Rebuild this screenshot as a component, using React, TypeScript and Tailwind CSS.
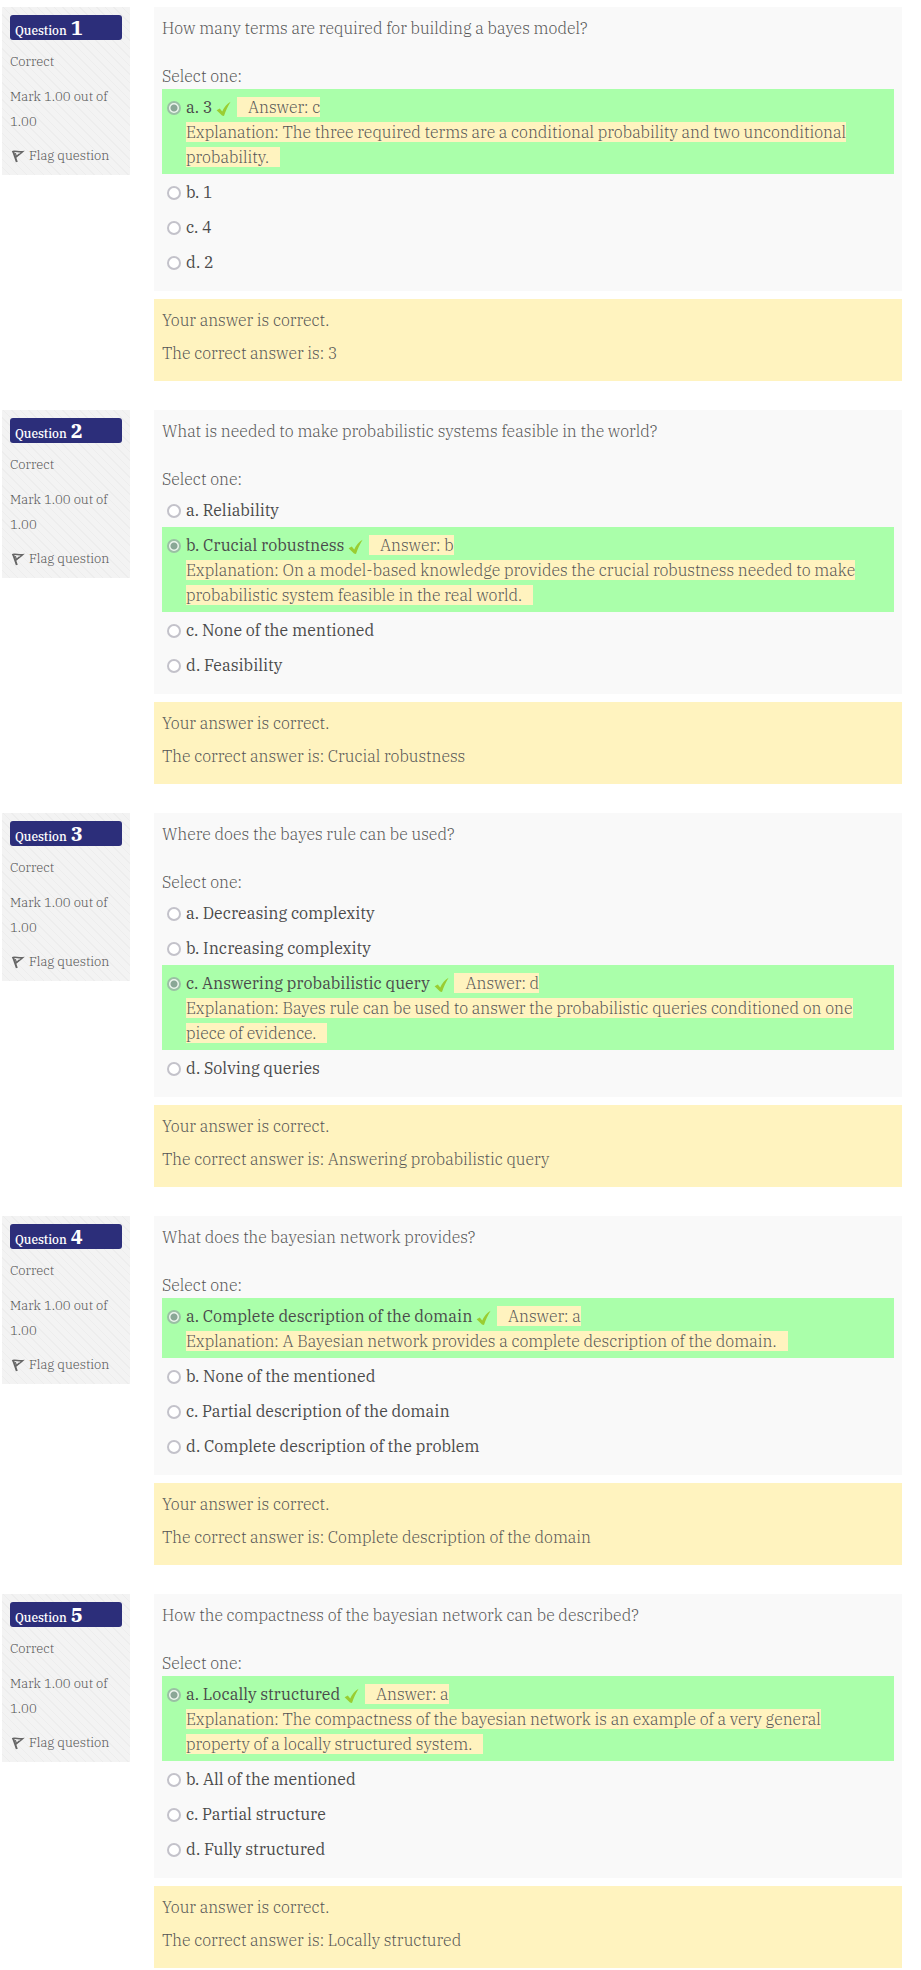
type Question = {
  number: number;
  text: string;
  options: string[];
  chosen: number;
  answer: string;
  explanation: string;
};

const questions: Question[] = [
  {
    number: 1,
    text: "How many terms are required for building a bayes model?",
    options: ["3", "1", "4", "2"],
    chosen: 0,
    answer: "c",
    explanation: "The three required terms are a conditional probability and two unconditional probability.",
  },
  {
    number: 2,
    text: "What is needed to make probabilistic systems feasible in the world?",
    options: ["Reliability", "Crucial robustness", "None of the mentioned", "Feasibility"],
    chosen: 1,
    answer: "b",
    explanation:
      "On a model-based knowledge provides the crucial robustness needed to make probabilistic system feasible in the real world.",
  },
  {
    number: 3,
    text: "Where does the bayes rule can be used?",
    options: ["Decreasing complexity", "Increasing complexity", "Answering probabilistic query", "Solving queries"],
    chosen: 2,
    answer: "d",
    explanation: "Bayes rule can be used to answer the probabilistic queries conditioned on one piece of evidence.",
  },
  {
    number: 4,
    text: "What does the bayesian network provides?",
    options: [
      "Complete description of the domain",
      "None of the mentioned",
      "Partial description of the domain",
      "Complete description of the problem",
    ],
    chosen: 0,
    answer: "a",
    explanation: "A Bayesian network provides a complete description of the domain.",
  },
  {
    number: 5,
    text: "How the compactness of the bayesian network can be described?",
    options: ["Locally structured", "All of the mentioned", "Partial structure", "Fully structured"],
    chosen: 0,
    answer: "a",
    explanation:
      "The compactness of the bayesian network is an example of a very general property of a locally structured system.",
  },
];

function FlagIcon() {
  return (
    <svg className="h-4 w-4 shrink-0" viewBox="0 0 16 16" fill="none" stroke="#666" aria-hidden="true">
      <path d="M3 3 6.8 14" strokeWidth="2" />
      <path d="M2.2 3.6C5 2.6 8.5 4.200 12.600 3.700C10.600 5.400 8.500 7.200 6 9" strokeWidth="1.4" />
      <path d="M5.400 5.200 6.400 8.600 9.200 5.800" strokeWidth="1.2" />
    </svg>
  );
}

function CheckIcon() {
  return (
    <svg className="ml-1 inline-block h-4 w-4 align-[-4px]" viewBox="0 0 16 16" role="img" aria-label="Correct">
      <path d="M0.600 9.200 3.800 7.600 6.200 10.400C8 6.400 11 2.800 14.600 0.800 12 5.200 9.600 9.800 8 15L6 14.600Z" fill="#9acd32" />
    </svg>
  );
}

function InfoPanel({ number }: { number: number }) {
  return (
    <aside className="w-32 shrink-0 self-start bg-[#f3f3f3] bg-[repeating-linear-gradient(45deg,#f3f3f3_0px,#f3f3f3_5px,#ededed_5px,#ededed_6px)] px-2 pt-2 pb-[7px] text-[13px] leading-[25px]">
      <h3 className="flex h-[25px] items-baseline gap-1 rounded-[3px] bg-[#2c2e7a] pl-[5px] text-xs leading-[25px] font-medium text-white">
        Question <span className="text-xl leading-[25px] font-bold">{number}</span>
      </h3>
      <div className="mt-[9px]">Correct</div>
      <div className="mt-[10px]">Mark 1.00 out of 1.00</div>
      <a href="#flag" className="mt-[9px] flex items-center gap-[3px]">
        <FlagIcon />
        Flag question
      </a>
    </aside>
  );
}

function Option({ question, index }: { question: Question; index: number }) {
  const id = `q${question.number}-${index}`;
  const checked = index === question.chosen;
  return (
    <div className={checked ? "flex bg-[#aaffaa] pt-[6px] pr-4 pb-1 pl-[5px]" : "flex pt-[6px] pr-4 pb-1 pl-[5px]"}>
      <input
        type="radio"
        id={id}
        name={`q${question.number}`}
        defaultChecked={checked}
        disabled
        className="mt-[6px] mr-[5px] h-[14px] w-[14px] shrink-0 appearance-none rounded-full border-2 border-[#c3c2ca] bg-white checked:border-[#9ac0a4] checked:bg-[radial-gradient(circle,#8aa796_0px,#8aa796_3px,#edf5ee_4px)]"
      />
      <div>
        <label htmlFor={id} className="font-normal text-[#4a4a4a]">
          {"abcd"[index]}. {question.options[index]}
        </label>
        {checked && (
          <>
            <CheckIcon />{" "}
            <span className="ml-px bg-[#fff3bf] pl-[11px]">Answer: {question.answer}</span>
            <br />
            <span className="bg-[#fff3bf] pr-[11px]">Explanation: {question.explanation}</span>
          </>
        )}
      </div>
    </div>
  );
}

function QuestionBlock({ question }: { question: Question }) {
  return (
    <section className="flex gap-6">
      <InfoPanel number={question.number} />
      <div className="min-w-0 flex-1">
        <div className="bg-[#f9f9f9] px-2 pt-[9px] pb-3">
          <p>{question.text}</p>
          <fieldset className="mt-[23px]">
            <legend>Select one:</legend>
            {question.options.map((option, index) => (
              <Option key={option} question={question} index={index} />
            ))}
          </fieldset>
        </div>
        <div className="mt-2 bg-[#fff3bf] px-2 pt-[9px] pb-[15px]">
          <p>Your answer is correct.</p>
          <p className="mt-2">The correct answer is: {question.options[question.chosen]}</p>
        </div>
      </div>
    </section>
  );
}

export default function App() {
  return (
    <main className="flex flex-col gap-[29px] bg-white pt-[7px] pr-[19px] pl-[2px] font-['Roboto_Slab','IBM_Plex_Serif','DejaVu_Serif_Condensed',serif] text-base leading-[25px] font-light text-[#555]">
      {questions.map((question) => (
        <QuestionBlock key={question.number} question={question} />
      ))}
    </main>
  );
}
